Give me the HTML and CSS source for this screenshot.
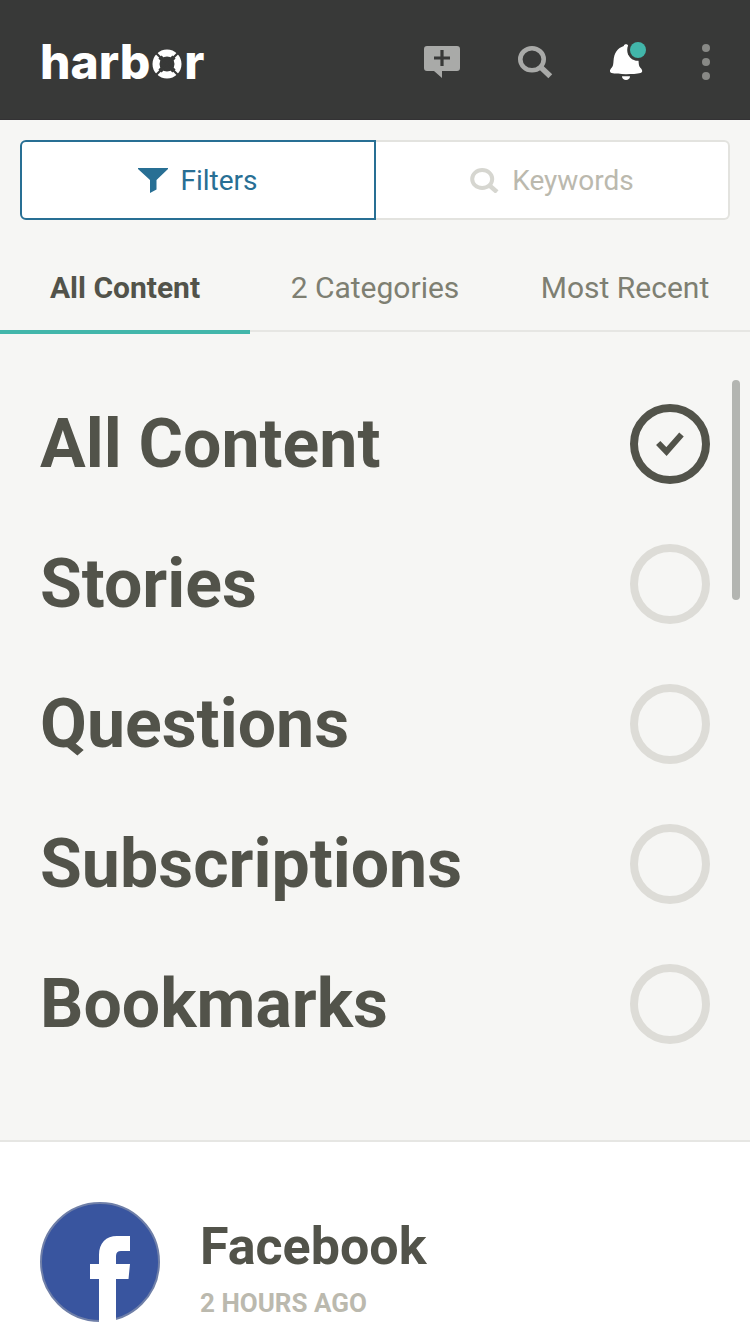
FILE: index.html
```html
<!DOCTYPE html>
<html lang="en">
<head>
<meta charset="utf-8">
<meta name="viewport" content="width=device-width, initial-scale=1">
<title>Harbor</title>
<link rel="stylesheet" href="styles.css">
</head>
<body>
<header class="topbar">
  <a class="logo" href="#" aria-label="harbor">
    <span>harb</span>
    <svg class="logo-ring" viewBox="0 0 30 30" aria-hidden="true">
      <circle cx="15" cy="15" r="11" fill="none" stroke="#fff" stroke-width="7"/>
      <path d="M3 3l24 24M27 3L3 27" stroke="#383938" stroke-width="2.200"/>
      <path d="M8 8l3 3M22 8l-3 3M8 22l3-3M22 22l-3-3" stroke="#383938" stroke-width="4.500"/>
    </svg>
    <span>r</span>
  </a>
  <nav class="actions" aria-label="Main">
    <button class="icon-button" type="button" aria-label="New post">
      <svg width="36" height="36" viewBox="0 0 36 36"><path fill="#a9aaa8" d="M3 2h30a3 3 0 0 1 3 3v19a3 3 0 0 1-3 3H18v7l-8-7H3a3 3 0 0 1-3-3V5a3 3 0 0 1 3-3z"/><path d="M18 6v16M10 14h16" stroke="#383938" stroke-width="3.2"/></svg>
    </button>
    <button class="icon-button" type="button" aria-label="Search">
      <svg width="38" height="36" viewBox="0 0 38 36"><ellipse cx="16" cy="15.3" rx="11.7" ry="11" fill="none" stroke="#a9aaa8" stroke-width="4.6"/><path d="M24 22.5l10.300 9.700" stroke="#a9aaa8" stroke-width="5.500"/></svg>
    </button>
    <button class="icon-button" type="button" aria-label="Notifications">
      <svg width="36" height="40" viewBox="0 2 36 40"><path fill="#fff" d="M13.800 6C13.800 3.500 18.200 3.500 18.200 6C25 8 28.300 14 28.600 21.500C28.800 26 29.500 27 31.300 28.700C33 31 32 32.500 30.500 33C24 34.600 8 34.600 1.500 33C0 32.500-.800 31 .800 28.700C2.600 27 3.200 26 3.500 21C4 13 7.500 8 13.800 6z"/><path fill="#fff" d="M12 36.200h8c0 5-8 5-8 0z"/><circle cx="28" cy="10" r="10.800" fill="#383938"/><circle cx="28" cy="10" r="8" fill="#42b6aa"/></svg>
    </button>
    <button class="icon-button" type="button" aria-label="More">
      <svg width="8" height="36" viewBox="0 0 8 36" fill="#888986"><circle cx="4" cy="4" r="4"/><circle cx="4" cy="18" r="4"/><circle cx="4" cy="32" r="4"/></svg>
    </button>
  </nav>
</header>

<main>
  <div class="segments">
    <button class="segment segment-active" type="button">
      <svg width="30" height="26" viewBox="0 0 30 26" aria-hidden="true"><path fill="#286f94" d="M0 1h30v1L18.500 13v9.500L12 26V13L0 2z"/></svg>
      Filters
    </button>
    <button class="segment" type="button">
      <svg width="30" height="26" viewBox="0 0 30 26" aria-hidden="true"><ellipse cx="12.200" cy="12" rx="10" ry="9" fill="none" stroke="#d6d6d0" stroke-width="4"/><path d="M19.500 18.500l7.500 6.500" stroke="#d6d6d0" stroke-width="4.500"/></svg>
      Keywords
    </button>
  </div>

  <div class="tabs" role="tablist">
    <button class="tab tab-active" type="button" role="tab" aria-selected="true">All Content</button>
    <button class="tab" type="button" role="tab" aria-selected="false">2 Categories</button>
    <button class="tab" type="button" role="tab" aria-selected="false">Most Recent</button>
  </div>

  <div class="options" role="radiogroup" aria-label="Content type">
    <label class="option">All Content
      <span class="mark"><input type="radio" name="content" checked><svg class="tick" width="28" height="24" viewBox="0 0 28 24" aria-hidden="true"><path d="M2.200 11l8.300 8.500L25.500 2.500" fill="none" stroke="#52534a" stroke-width="6"/></svg></span>
    </label>
    <label class="option">Stories
      <span class="mark"><input type="radio" name="content"></span>
    </label>
    <label class="option">Questions
      <span class="mark"><input type="radio" name="content"></span>
    </label>
    <label class="option">Subscriptions
      <span class="mark"><input type="radio" name="content"></span>
    </label>
    <label class="option">Bookmarks
      <span class="mark"><input type="radio" name="content"></span>
    </label>
    <span class="scroll-thumb"></span>
  </div>

  <article class="post">
    <svg class="avatar" viewBox="0 0 120 120" aria-hidden="true"><circle cx="60" cy="60" r="59" fill="#39559f" stroke="#6f7fa8" stroke-width="2"/><path fill="#fff" d="M59 120V77h-9V62h9V53C59 41 66 34 77 34h13v15h-9q-5 0-5 5v8h14l-1.500 15H76v43z"/></svg>
    <div class="post-text">
      <h2 class="post-title">Facebook</h2>
      <time class="post-time">2 HOURS AGO</time>
    </div>
  </article>
</main>
</body>
</html>
```

FILE: styles.css
```css
* {
  box-sizing: border-box;
}

body {
  margin: 0;
  background: #f6f6f4;
  color: #52534a;
  font-family: Roboto, "Liberation Sans", sans-serif;
}

button {
  margin: 0;
  padding: 0;
  border: 0;
  background: none;
  color: inherit;
  font: inherit;
  cursor: pointer;
}

svg {
  display: block;
}

.topbar {
  display: flex;
  align-items: center;
  justify-content: space-between;
  height: 120px;
  padding: 5px 40px 0;
  border-bottom: 1px solid #333234;
  background: #383938;
}

.logo {
  display: flex;
  align-items: baseline;
  gap: 2px;
  color: #fff;
  font: 800 48px/56px Inter, "Liberation Sans", sans-serif;
  text-decoration: none;
}

.logo-ring {
  width: 30px;
  height: 30px;
}

.actions {
  display: flex;
  align-items: center;
  gap: 56px;
}

.segments {
  display: flex;
  padding: 20px 20px 0;
}

.segment {
  display: flex;
  flex: 1;
  align-items: center;
  justify-content: center;
  gap: 12px;
  height: 80px;
  border: 2px solid #e3e3df;
  border-left: 0;
  border-radius: 0 6px 6px 0;
  background: #fff;
  color: #bbb9ae;
  font-size: 28px;
}

.segment-active {
  border: 2px solid #286f94;
  border-radius: 6px 0 0 6px;
  color: #286f94;
}

.tabs {
  display: flex;
  border-bottom: 2px solid #e6e6e3;
}

.tab {
  position: relative;
  flex: 1;
  padding: 50px 0 24px;
  color: #7e7f72;
  font-size: 30px;
  line-height: 36px;
}

.tab-active {
  color: #52534a;
  font-weight: 700;
}

.tab-active::after {
  content: "";
  position: absolute;
  right: 0;
  bottom: -4px;
  left: 0;
  height: 4px;
  background: #42b6aa;
}

.options {
  position: relative;
  padding: 42px 40px 66px;
  border-bottom: 2px solid #e6e6e3;
}

.option {
  display: flex;
  align-items: center;
  justify-content: space-between;
  height: 140px;
  font-size: 68px;
  font-weight: 700;
  line-height: 80px;
}

.mark {
  display: grid;
  place-items: center;
}

.mark > * {
  grid-area: 1 / 1;
}

.mark input {
  width: 80px;
  height: 80px;
  margin: 0;
  border: 8px solid #dddcd7;
  border-radius: 50%;
  appearance: none;
}

.mark input:checked {
  border-color: #52534a;
}

.tick {
  pointer-events: none;
}

.scroll-thumb {
  position: absolute;
  top: 48px;
  right: 10px;
  width: 8px;
  height: 220px;
  border-radius: 4px;
  background: #b3b5b1;
}

.post {
  display: flex;
  gap: 40px;
  padding: 60px 40px 12px;
  background: #fff;
}

.avatar {
  width: 120px;
  height: 120px;
}

.post-text {
  display: flex;
  flex-direction: column;
  gap: 10px;
  padding-top: 15px;
}

.post-title {
  margin: 0;
  font-size: 52px;
  font-weight: 700;
  line-height: 60px;
}

.post-time {
  color: #bbb9ae;
  font-size: 26px;
  font-weight: 700;
  line-height: 32px;
}
```
